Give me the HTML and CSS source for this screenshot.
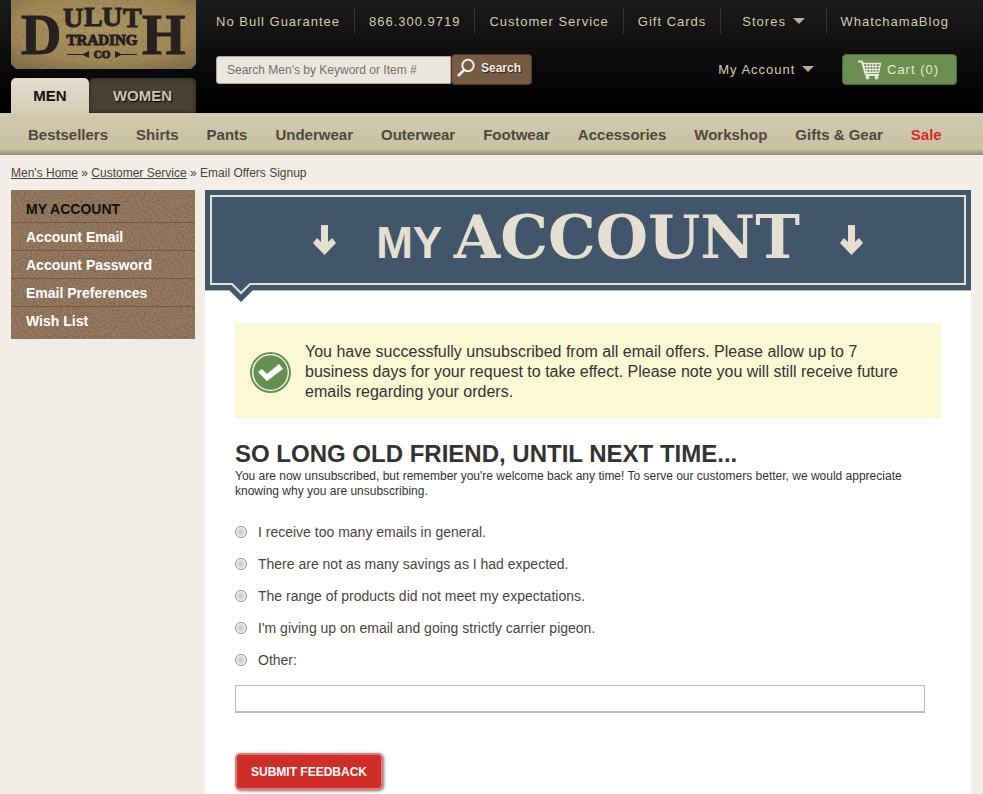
FILE: index.html
```html
<!DOCTYPE html>
<html lang="en">
<head>
    <meta charset="UTF-8">
    <title>Email Offers Signup</title>
    <link rel="stylesheet" href="styles.css">
</head>
<body>
    <header class="header">
        <div class="brand">
            <a href="#" class="logo">
                <svg width="185" height="69" viewBox="0 0 185 69" role="img" aria-label="Duluth Trading Co">
                    <defs>
                        <filter id="grain" x="0" y="0" width="100%" height="100%">
                            <feTurbulence type="fractalNoise" baseFrequency="0.5" numOctaves="2"/>
                            <feColorMatrix values="0 0 0 0 0.2  0 0 0 0 0.15  0 0 0 0 0.05  0 0 0 1.2 -0.45"/>
                            <feComposite in2="SourceGraphic" operator="in"/>
                        </filter>
                        <radialGradient id="leather" cx="50%" cy="40%" r="70%">
                            <stop offset="0" stop-color="#b19a66"/>
                            <stop offset="0.7" stop-color="#a28a58"/>
                            <stop offset="1" stop-color="#83704a"/>
                        </radialGradient>
                    </defs>
                    <path d="M0 0H185V64L180 69H5L0 64Z" fill="url(#leather)"/>
                    <path d="M0 0H185V64L180 69H5L0 64Z" filter="url(#grain)"/>
                    <text class="logo-word">
                        <tspan x="10" y="54" font-size="56">D</tspan><tspan x="52" y="27" font-size="28">U</tspan><tspan x="73" y="26" font-size="28">L</tspan><tspan x="91" y="26" font-size="28">U</tspan><tspan x="112" y="27" font-size="28">T</tspan><tspan x="131" y="54" font-size="56">H</tspan>
                    </text>
                    <text class="logo-trading" x="91" y="45" font-size="15" text-anchor="middle">TRADING</text>
                    <text class="logo-trading" x="91" y="58" font-size="11" text-anchor="middle">CO</text>
                    <path d="M56 54H72L78 51V58L72 55H56ZM126 54H110L104 51V58L110 55H126Z" fill="#262120"/>
                </svg>
            </a>
            <div class="tabs">
                <a href="#" class="tab active">MEN</a>
                <a href="#" class="tab">WOMEN</a>
            </div>
        </div>
        <div class="header-content">
            <ul class="top-links">
                <li><a href="#">No Bull Guarantee</a></li>
                <li><a href="#">866.300.9719</a></li>
                <li><a href="#">Customer Service</a></li>
                <li><a href="#">Gift Cards</a></li>
                <li class="has-menu"><a href="#">Stores <span class="caret"></span></a></li>
                <li><a href="#">WhatchamaBlog</a></li>
            </ul>
            <div class="header-tools">
                <form class="search">
                    <input type="text" class="search-input" aria-label="Search" placeholder="Search Men's by Keyword or Item #">
                    <button type="button" class="search-button">
                        <svg width="20" height="20" viewBox="0 0 20 20">
                            <circle cx="12" cy="7.5" r="5.7" fill="none" stroke="#f3eee4" stroke-width="2"/>
                            <path d="M8 12L2 18" stroke="#f3eee4" stroke-width="2.6"/>
                        </svg>
                        Search
                    </button>
                </form>
                <a href="#" class="my-account">My Account <span class="caret"></span></a>
                <a href="#" class="cart">
                    <svg width="25" height="20" viewBox="0 0 25 20">
                        <path d="M1 1.5H5L9 15H22" fill="none" stroke="#ece8dc" stroke-width="1.8"/>
                        <path d="M5.5 3.5H23.5L21.5 12.5H8Z" fill="none" stroke="#ece8dc" stroke-width="1.4"/>
                        <path d="M6.5 6.5H23M7.5 9.5H22M10 3V12.5M13 3V12.5M16 3V12.5M19 3V12.5" stroke="#ece8dc" stroke-width="1.2"/>
                        <circle cx="10.5" cy="17.5" r="1.9" fill="#ece8dc"/>
                        <circle cx="19.5" cy="17.5" r="1.9" fill="#ece8dc"/>
                    </svg>
                    Cart (0)
                </a>
            </div>
        </div>
    </header>

    <nav class="categories">
        <a href="#">Bestsellers</a>
        <a href="#">Shirts</a>
        <a href="#">Pants</a>
        <a href="#">Underwear</a>
        <a href="#">Outerwear</a>
        <a href="#">Footwear</a>
        <a href="#">Accessories</a>
        <a href="#">Workshop</a>
        <a href="#">Gifts &amp; Gear</a>
        <a href="#" class="sale">Sale</a>
    </nav>

    <div class="breadcrumb">
        <a href="#">Men's Home</a> &raquo; <a href="#">Customer Service</a> &raquo; Email Offers Signup
    </div>

    <div class="page">
        <aside class="sidebar">
            <a href="#" class="current">MY ACCOUNT</a>
            <a href="#">Account Email</a>
            <a href="#">Account Password</a>
            <a href="#">Email Preferences</a>
            <a href="#">Wish List</a>
        </aside>

        <main class="content">
            <div class="banner">
                <h1 class="banner-title">
                    <svg width="23" height="30" viewBox="0 0 23 30">
                        <path d="M8 0H15V17L19 13L23 18L11.5 30L0 18L4 13L8 17Z" fill="#e5dfd1"/>
                    </svg>
                    <span class="banner-text">MY <span class="banner-account">ACCOUNT</span></span>
                    <svg width="23" height="30" viewBox="0 0 23 30">
                        <path d="M8 0H15V17L19 13L23 18L11.5 30L0 18L4 13L8 17Z" fill="#e5dfd1"/>
                    </svg>
                </h1>
                <svg class="banner-pointer" width="24" height="19" viewBox="0 0 24 19">
                    <path d="M2 0H22V7H24L12 19L0 7H2Z" fill="#42566b"/>
                    <path d="M1 1H3L12 10L21 1H23" fill="none" stroke="#e5dfd1" stroke-width="2"/>
                </svg>
            </div>

            <div class="content-body">
                <div class="message">
                    <svg class="message-icon" width="41" height="41" viewBox="0 0 41 41">
                        <circle cx="20.5" cy="20.5" r="20.5" fill="#66904e"/>
                        <circle cx="20.5" cy="20.5" r="17.8" fill="none" stroke="#fff" stroke-width="1.3"/>
                        <path d="M8 20L12 17L17 22L29 12L33 17L17 29Z" fill="#fff"/>
                    </svg>
                    <p>You have successfully unsubscribed from all email offers. Please allow up to 7 business days for your request to take effect. Please note you will still receive future emails regarding your orders.</p>
                </div>

                <h2>SO LONG OLD FRIEND, UNTIL NEXT TIME...</h2>
                <p class="intro">You are now unsubscribed, but remember you're welcome back any time! To serve our customers better, we would appreciate knowing why you are unsubscribing.</p>

                <form class="feedback">
                    <label class="option"><input type="radio" name="reason"> I receive too many emails in general.</label>
                    <label class="option"><input type="radio" name="reason"> There are not as many savings as I had expected.</label>
                    <label class="option"><input type="radio" name="reason"> The range of products did not meet my expectations.</label>
                    <label class="option"><input type="radio" name="reason"> I'm giving up on email and going strictly carrier pigeon.</label>
                    <label class="option"><input type="radio" name="reason"> Other:</label>
                    <input type="text" class="other-input" aria-label="Other reason">
                    <button type="button" class="submit-button">SUBMIT FEEDBACK</button>
                </form>
            </div>
        </main>
    </div>
</body>
</html>
```
FILE: styles.css
```css
/* Global Styles */
* {
    box-sizing: border-box;
}

body {
    margin: 0;
    min-height: 100vh;
    display: flex;
    flex-direction: column;
    font-family: "Liberation Sans", Arial, sans-serif;
    font-size: 12px;
    color: #333;
    background-color: #f2eee7;
}

h1, h2, p, ul {
    margin: 0;
    padding: 0;
}

input, button {
    font-family: inherit;
}

a {
    color: inherit;
    text-decoration: none;
}

/* Header */
.header {
    display: flex;
    gap: 20px;
    padding: 0 12px 0 11px;
    background: linear-gradient(#1b1b1b, #000 95%);
}

.brand {
    width: 185px;
    flex-shrink: 0;
}

.logo, .logo svg {
    display: block;
}

.logo-word,
.logo-trading {
    font-family: "Liberation Serif", serif;
    font-weight: bold;
    fill: #262120;
    stroke: #262120;
    stroke-width: 1px;
}

.tabs {
    display: flex;
    margin-top: 9px;
}

.tab {
    flex: 1 1 auto;
    height: 35px;
    line-height: 35px;
    text-align: center;
    font-size: 15px;
    font-weight: bold;
    color: #cdc5ab;
    text-shadow: 1px 1px 1px #000;
    background-color: #464132;
    border-radius: 5px 5px 0 0;
    box-shadow: inset 0 0 4px #222;
}

.tab.active {
    flex: 0 0 78px;
    color: #111;
    text-shadow: none;
    background: linear-gradient(#e3dece, #d5ccb3);
    box-shadow: none;
}

.header-content {
    flex: 1;
    padding-top: 8px;
}

.top-links {
    display: flex;
    list-style: none;
    font-size: 13px;
    letter-spacing: 1px;
    color: #d3cdad;
}

.top-links li {
    padding: 2px 14px 0;
    line-height: 24px;
    white-space: nowrap;
    border-right: 1px solid #353535;
}

.top-links li:first-child {
    padding-left: 0;
}

.top-links li:last-child {
    border-right: none;
}

.top-links .has-menu {
    padding: 2px 21px 0;
}

.caret {
    display: inline-block;
    margin-left: 2px;
    border: 6px solid transparent;
    border-top-color: #b8b08c;
    border-bottom: none;
    vertical-align: 2px;
}

.header-tools {
    display: flex;
    align-items: center;
    margin-top: 20px;
    padding-right: 14px;
}

.search {
    display: flex;
    align-items: center;
}

.search-input {
    width: 235px;
    height: 28px;
    padding: 0 10px;
    font-size: 12px;
    color: #666;
    background-color: #ece7de;
    border: 1px solid #aaa69d;
    border-radius: 3px 0 0 3px;
}

.search-input::placeholder {
    color: #707070;
}

.search-button {
    display: flex;
    align-items: center;
    gap: 5px;
    width: 81px;
    height: 31px;
    padding: 0 4px 3px;
    font-size: 12px;
    font-weight: bold;
    color: #f3eee4;
    text-shadow: 1px 1px 1px #222;
    background-color: #765a43;
    border: 1px solid #4d3c2f;
    border-radius: 4px;
    cursor: pointer;
}

.my-account {
    margin-left: auto;
    margin-right: 28px;
    font-size: 13px;
    letter-spacing: 1px;
    color: #d3cdad;
}

.cart {
    display: flex;
    align-items: center;
    gap: 5px;
    width: 115px;
    height: 31px;
    padding-left: 14px;
    font-size: 13px;
    letter-spacing: 1px;
    color: #ece8dc;
    background-color: #6a8f50;
    border: 1px solid #4c6839;
    border-radius: 4px;
}

/* Category Navigation */
.categories {
    display: flex;
    gap: 28px;
    padding: 2px 28px 0;
    font-size: 15px;
    font-weight: bold;
    line-height: 40px;
    white-space: nowrap;
    color: #4f4838;
    background: linear-gradient(#d2c9af, #c9c1a5 85%, #8f8d70);
}

.categories .sale {
    color: #d62b22;
}

.breadcrumb {
    padding: 11px 11px 9px;
    line-height: 15px;
    color: #4a433a;
}

.breadcrumb a {
    text-decoration: underline;
}

/* Page Layout */
.page {
    flex: 1;
    display: flex;
    gap: 10px;
    padding: 0 12px 0 11px;
}

.sidebar {
    width: 184px;
    flex-shrink: 0;
    align-self: flex-start;
    padding: 5px 0 4px;
    background-color: #947b61;
    background-image: url("data:image/svg+xml,%3Csvg xmlns='http://www.w3.org/2000/svg' width='120' height='120'%3E%3Cfilter id='n' x='0' y='0' width='100%25' height='100%25'%3E%3CfeTurbulence type='fractalNoise' baseFrequency='0.6' numOctaves='2' stitchTiles='stitch'/%3E%3CfeColorMatrix values='0 0 0 0 0.1 0 0 0 0 0.05 0 0 0 0 0.02 1.2 0 0 0 -0.5'/%3E%3C/filter%3E%3Crect width='120' height='120' filter='url(%23n)'/%3E%3C/svg%3E");
}

.sidebar a {
    display: block;
    padding-left: 15px;
    height: 28px;
    line-height: 28px;
    font-size: 14px;
    font-weight: bold;
    color: #fff;
    border-bottom: 1px solid #6f5944;
}

.sidebar a:last-child {
    border-bottom: none;
}

.sidebar .current {
    color: #111;
}

.content {
    flex: 1;
    background-color: #fff;
}

/* Banner */
.banner {
    position: relative;
    padding: 5px;
    background-color: #42566b;
    border-bottom: 1px solid #b9bab5;
}

.banner-title {
    display: flex;
    align-items: center;
    justify-content: center;
    gap: 40px;
    height: 90px;
    line-height: 86px;
    color: #e5dfd1;
    border: 2px solid #e5dfd1;
}

.banner-text {
    font-size: 44px;
}

.banner-account {
    font-family: "DejaVu Serif", serif;
    font-size: 60px;
}

.banner-pointer {
    position: absolute;
    left: 24px;
    top: 93px;
}

.content-body {
    padding: 32px 30px 4px;
}

.message {
    display: flex;
    align-items: center;
    gap: 14px;
    padding: 19px 30px 16px 15px;
    font-size: 16px;
    line-height: 20px;
    background-color: #fbf9d3;
}

.message-icon {
    flex-shrink: 0;
}

h2 {
    margin-top: 22px;
    font-size: 24px;
    line-height: 28px;
}

.intro {
    margin-top: 1px;
    line-height: 15px;
}

/* Feedback Form */
.feedback {
    margin-top: 17px;
}

.option {
    display: flex;
    align-items: center;
    gap: 11px;
    height: 32px;
    font-size: 14px;
    color: #4a453e;
}

.option input {
    appearance: none;
    width: 12px;
    height: 12px;
    margin: 0;
    border: 1px solid #8e8f8f;
    border-radius: 50%;
    background: radial-gradient(#c4c6c8, #dcdddd 50%, #f4f4f4 60%);
}

.option input:checked {
    background: radial-gradient(#333 35%, #f4f4f4 45%);
}

.other-input {
    display: block;
    width: calc(100% - 16px);
    height: 28px;
    margin-top: 9px;
    padding: 0 6px;
    border: 1px solid #bbb;
    border-bottom-width: 2px;
}

.submit-button {
    display: block;
    height: 37px;
    margin-top: 40px;
    padding: 0 14px;
    font-size: 12px;
    font-weight: bold;
    color: #fff;
    background-color: #cf2d27;
    border: 2px solid #e07a74;
    border-radius: 5px;
    box-shadow: 1px 1px 3px #777;
    cursor: pointer;
}
```
